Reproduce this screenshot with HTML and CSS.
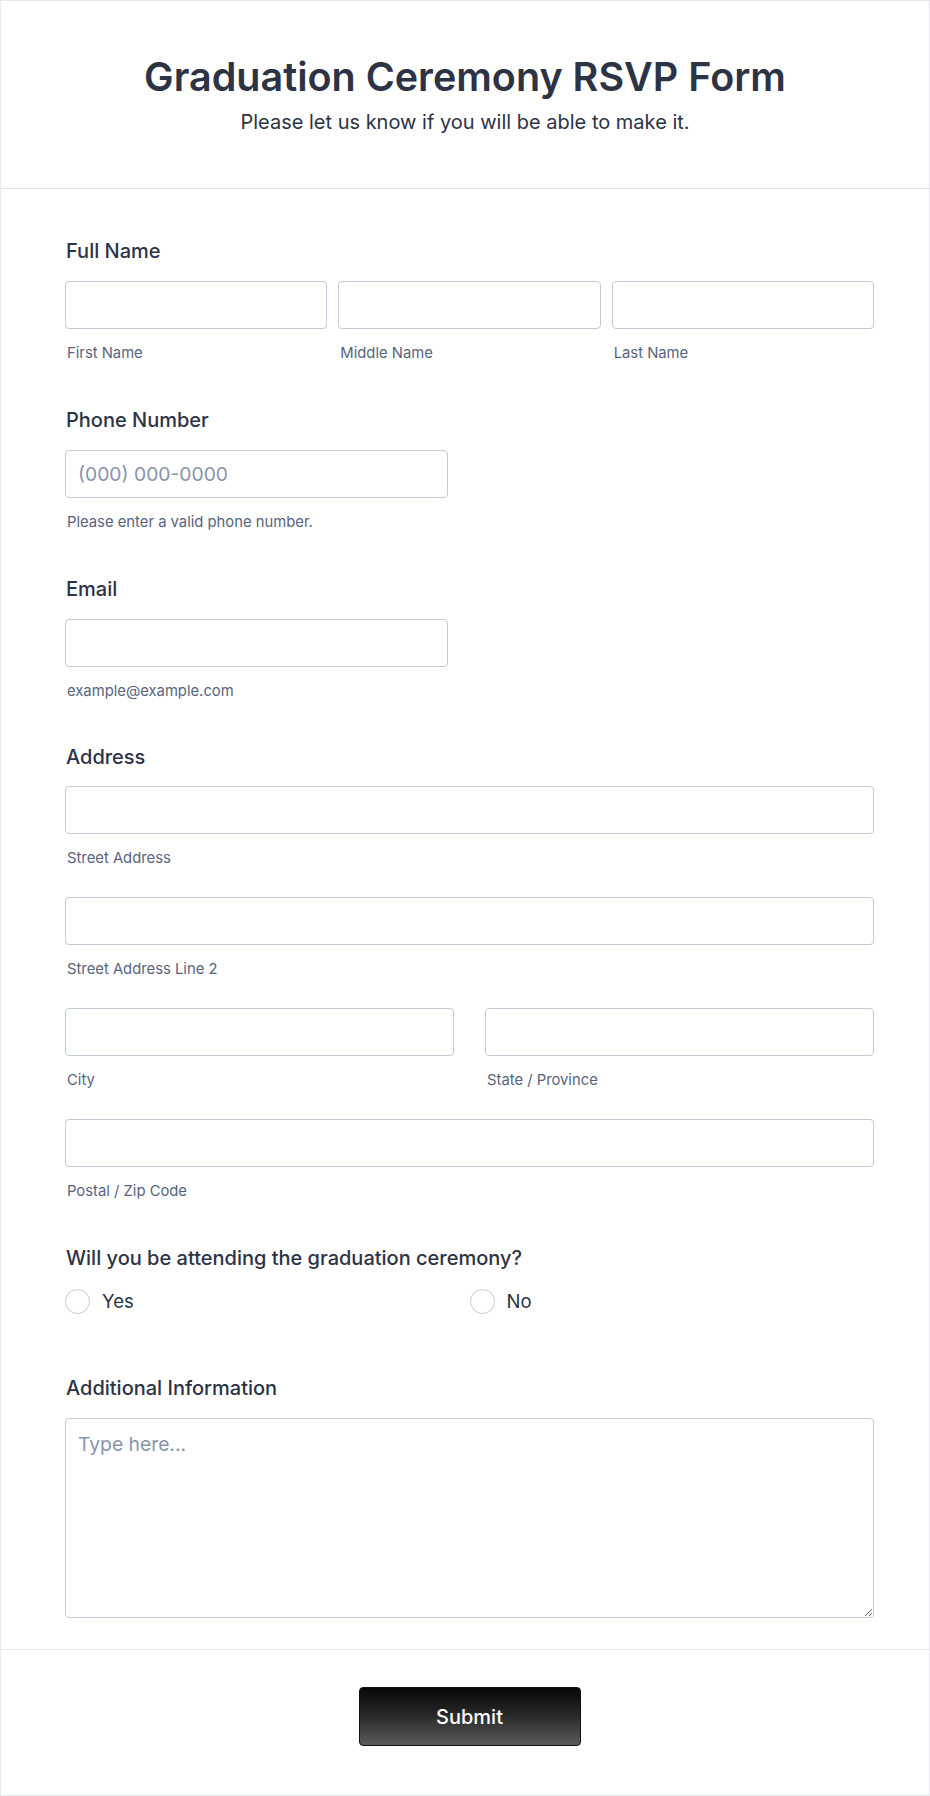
FILE: index.html
```html
<!DOCTYPE html>
<html lang="en">
<head>
<meta charset="utf-8">
<title>Graduation Ceremony RSVP Form</title>
<link rel="stylesheet" href="styles.css">
</head>
<body>
<form class="page">
  <header class="header">
    <h1 class="title">Graduation Ceremony RSVP Form</h1>
    <p class="subtitle">Please let us know if you will be able to make it.</p>
  </header>

  <div class="body">
    <section class="field">
      <label class="label">Full Name</label>
      <div class="row row-3">
        <div class="cell"><input class="input" type="text"><span class="sub">First Name</span></div>
        <div class="cell"><input class="input" type="text"><span class="sub">Middle Name</span></div>
        <div class="cell"><input class="input" type="text"><span class="sub">Last Name</span></div>
      </div>
    </section>

    <section class="field">
      <label class="label">Phone Number</label>
      <div class="cell narrow"><input class="input" type="tel" placeholder="(000) 000-0000"><span class="sub">Please enter a valid phone number.</span></div>
    </section>

    <section class="field field-email">
      <label class="label">Email</label>
      <div class="cell narrow"><input class="input" type="email"><span class="sub">example@example.com</span></div>
    </section>

    <section class="field">
      <label class="label label-address">Address</label>
      <div class="stack">
        <div class="cell"><input class="input" type="text"><span class="sub">Street Address</span></div>
        <div class="cell"><input class="input" type="text"><span class="sub">Street Address Line 2</span></div>
        <div class="row row-2">
          <div class="cell"><input class="input" type="text"><span class="sub">City</span></div>
          <div class="cell"><input class="input" type="text"><span class="sub">State / Province</span></div>
        </div>
        <div class="cell"><input class="input" type="text"><span class="sub">Postal / Zip Code</span></div>
      </div>
    </section>

    <section class="field field-radio">
      <label class="label label-radio">Will you be attending the graduation ceremony?</label>
      <div class="radios">
        <label class="radio"><span class="circle"></span><span class="radio-text">Yes</span></label>
        <label class="radio"><span class="circle"></span><span class="radio-text">No</span></label>
      </div>
    </section>

    <section class="field field-last">
      <label class="label">Additional Information</label>
      <textarea class="textarea" placeholder="Type here..."></textarea>
    </section>
  </div>

  <footer class="footer">
    <button class="submit" type="button">Submit</button>
  </footer>
</form>
</body>
</html>
```
FILE: styles.css
```css
* { box-sizing: border-box; }

html, body {
  margin: 0;
  padding: 0;
  background: #ffffff;
}

body {
  font-family: Inter, "Noto Sans", "Liberation Sans", sans-serif;
  color: #2c3345;
}

.page {
  width: 930px;
  min-height: 1796px;
  border: 1px solid #e6e8ef;
  background: #ffffff;
  display: flex;
  flex-direction: column;
}

.header {
  padding: 52px 0 54px;
  text-align: center;
  border-bottom: 1px solid #dfe2ea;
}

.title {
  margin: 0;
  font-size: 39.5px;
  line-height: 48px;
  font-weight: 600;
  color: #2c3345;
}

.subtitle {
  margin: 9px 0 0;
  font-size: 20px;
  line-height: 24px;
  font-weight: 400;
  color: #2c3345;
}

.body {
  padding: 50px 55px 0 64px;
}

.field {
  display: flex;
  flex-direction: column;
  margin-bottom: 46px;
}

.field-email {
  margin-bottom: 45px;
}

.field-radio {
  margin-bottom: 63px;
}

.field-last {
  margin-bottom: 0;
  padding-bottom: 31px;
}

.label {
  display: block;
  font-size: 20px;
  line-height: 24px;
  font-weight: 500;
  color: #2c3345;
  padding-left: 1px;
  margin-bottom: 18px;
}

.label-address {
  margin-bottom: 17px;
}

.label-radio {
  margin-bottom: 19px;
}

.row {
  display: grid;
}

.row-3 {
  grid-template-columns: repeat(3, 1fr);
  column-gap: 11px;
}

.row-2 {
  grid-template-columns: repeat(2, 1fr);
  column-gap: 31px;
}

.stack {
  display: flex;
  flex-direction: column;
  row-gap: 30px;
}

.cell {
  display: flex;
  flex-direction: column;
}

.narrow {
  width: 383px;
}

.input {
  display: block;
  width: 100%;
  height: 48px;
  margin: 0;
  padding: 0 12px;
  border: 1px solid #c3cad8;
  border-radius: 4px;
  background: #ffffff;
  font-family: Inter, "Noto Sans", "Liberation Sans", sans-serif;
  font-size: 19.3px;
  color: #2c3345;
  outline: none;
}

.input::placeholder,
.textarea::placeholder {
  color: #8894ab;
  opacity: 1;
}

.sub {
  display: block;
  margin-top: 15px;
  padding-left: 2px;
  font-size: 14.8px;
  line-height: 18px;
  color: #57647e;
}

.radios {
  display: grid;
  grid-template-columns: repeat(2, 1fr);
}

.radio {
  display: flex;
  align-items: center;
  column-gap: 12px;
  height: 24px;
}

.circle {
  width: 25px;
  height: 25px;
  border: 1px solid #c3cad8;
  border-radius: 50%;
  background: #ffffff;
  flex: none;
}

.radio-text {
  font-size: 18.5px;
  line-height: 24px;
  color: #2c3345;
}

.textarea {
  display: block;
  width: 100%;
  height: 200px;
  margin: 0;
  padding: 12px 12px;
  border: 1px solid #c3cad8;
  border-radius: 4px;
  background: #ffffff;
  font-family: Inter, "Noto Sans", "Liberation Sans", sans-serif;
  font-size: 19.3px;
  line-height: 27px;
  color: #2c3345;
  outline: none;
  resize: vertical;
}

.footer {
  border-top: 1px solid #e6e8ef;
  padding: 37px 55px 49px 64px;
  display: flex;
  justify-content: center;
}

.submit {
  width: 222px;
  height: 59px;
  border: 1px solid #111111;
  border-radius: 4px;
  background: linear-gradient(180deg, #080808 0%, #262626 45%, #5a5a5a 100%);
  color: #ffffff;
  font-family: Inter, "Noto Sans", "Liberation Sans", sans-serif;
  font-size: 20px;
  font-weight: 500;
  cursor: pointer;
}
```
